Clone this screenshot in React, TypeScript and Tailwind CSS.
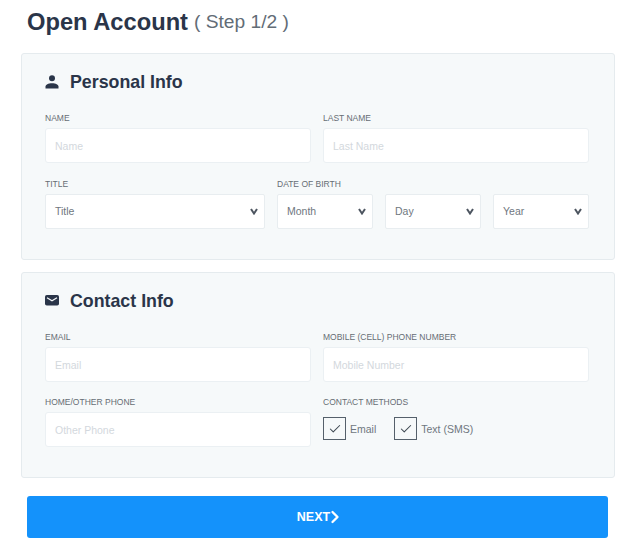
import { Check, ChevronRight } from "lucide-react";

const font = { fontFamily: '"Liberation Sans", Arial, sans-serif' };

function Label({ text }: { text: string }) {
  return <div className="h-[18px] text-[8.5px] leading-[18px] uppercase text-[#666d74]">{text}</div>;
}

function Field({ label, placeholder }: { label: string; placeholder: string }) {
  return (
    <div className="w-[266px]">
      <Label text={label} />
      <div className="mt-[1px] flex h-[35px] items-center rounded-[3px] border border-[#ebf0f3] bg-white pl-[9px] pt-[2px] text-[10.5px] text-[#d3d8dd]">
        {placeholder}
      </div>
    </div>
  );
}

function Select({ value, className }: { value: string; className: string }) {
  return (
    <div className={`flex h-[35px] items-center justify-between rounded-[2px] border border-[#e8edf0] bg-white pl-[9px] pr-[6px] text-[10.5px] text-[#6f7780] ${className}`}>
      {value}
      <svg width="8" height="7" viewBox="0 0 8 7" fill="none" stroke="#4d5560" strokeWidth="2">
        <path d="M1 1l3 4.500L7 1" />
      </svg>
    </div>
  );
}

function Method({ text }: { text: string }) {
  return (
    <div className="flex items-center gap-[4px] text-[10.5px] text-[#6f7780]">
      <div className="flex h-[23px] w-[23px] items-center justify-center border border-[#55606b] bg-[#f6f9fa]">
        <Check size={14} strokeWidth={1.8} color="#3c4650" />
      </div>
      <span className="pt-[2px]">{text}</span>
    </div>
  );
}

function Panel({ icon, title, className, children }: { icon: React.ReactNode; title: string; className: string; children: React.ReactNode }) {
  return (
    <section className={`ml-[21px] w-[594px] rounded-[3px] border border-[#e5ebee] bg-[#f6f9fa] px-[23px] pt-[14px] ${className}`}>
      <div className="flex h-[28px] items-center">
        <div className="flex w-[25px] items-center">{icon}</div>
        <h2 className="text-[17.8px] font-bold text-[#2a3549]">{title}</h2>
      </div>
      {children}
    </section>
  );
}

export default function App() {
  return (
    <div className="h-[551px] w-[624px] overflow-hidden bg-white" style={font}>
      <h1 className="ml-[27px] flex h-[53px] items-center pb-[8px] text-[23.7px] font-bold text-[#2a3549]">
        Open Account
        <span className="ml-[6px] text-[19.2px] font-normal text-[#626c76]">( Step 1/2 )</span>
      </h1>

      <Panel
        className="h-[207px]"
        title="Personal Info"
        icon={
          <svg width="14" height="14" viewBox="0 0 14 14" fill="#2a3549">
            <circle cx="7" cy="3.200" r="3" />
            <path d="M0.500 13.500v-1.900C0.500 9.800 3.200 8.300 7 8.300s6.500 1.500 6.500 3.300v1.900z" />
          </svg>
        }
      >
        <div className="mt-[13px] flex gap-[12px]">
          <Field label="Name" placeholder="Name" />
          <Field label="Last Name" placeholder="Last Name" />
        </div>
        <div className="mt-[12px] flex gap-[12px]">
          <div className="w-[220px]">
            <Label text="Title" />
            <div className="mt-[1px]">
              <Select value="Title" className="w-full" />
            </div>
          </div>
          <div>
            <Label text="Date of Birth" />
            <div className="mt-[1px] flex gap-[12px]">
              <Select value="Month" className="w-[96px]" />
              <Select value="Day" className="w-[96px]" />
              <Select value="Year" className="w-[96px]" />
            </div>
          </div>
        </div>
      </Panel>

      <Panel
        className="mt-[12px] h-[206px]"
        title="Contact Info"
        icon={
          <svg width="14" height="11" viewBox="0 0 14 11" className="-mt-[2px]">
            <rect width="14" height="10.500" rx="1.800" fill="#2a3549" />
            <path d="M2 2.800l5 3 5-3" fill="none" stroke="#f6f9fa" strokeWidth="1.200" />
          </svg>
        }
      >
        <div className="mt-[13px] flex gap-[12px]">
          <Field label="Email" placeholder="Email" />
          <Field label="Mobile (Cell) Phone Number" placeholder="Mobile Number" />
        </div>
        <div className="mt-[11px] flex gap-[12px]">
          <Field label="Home/Other Phone" placeholder="Other Phone" />
          <div className="w-[266px]">
            <Label text="Contact Methods" />
            <div className="mt-[6px] flex gap-[18px]">
              <Method text="Email" />
              <Method text="Text (SMS)" />
            </div>
          </div>
        </div>
      </Panel>

      <button className="ml-[27px] mt-[18px] flex h-[42px] w-[581px] items-center justify-center rounded-[3px] bg-[#1492fb] text-[12.5px] font-bold text-white">
        NEXT
        <ChevronRight size={20} strokeWidth={2.8} className="-ml-[5px] -mr-[7px]" />
      </button>
    </div>
  );
}
